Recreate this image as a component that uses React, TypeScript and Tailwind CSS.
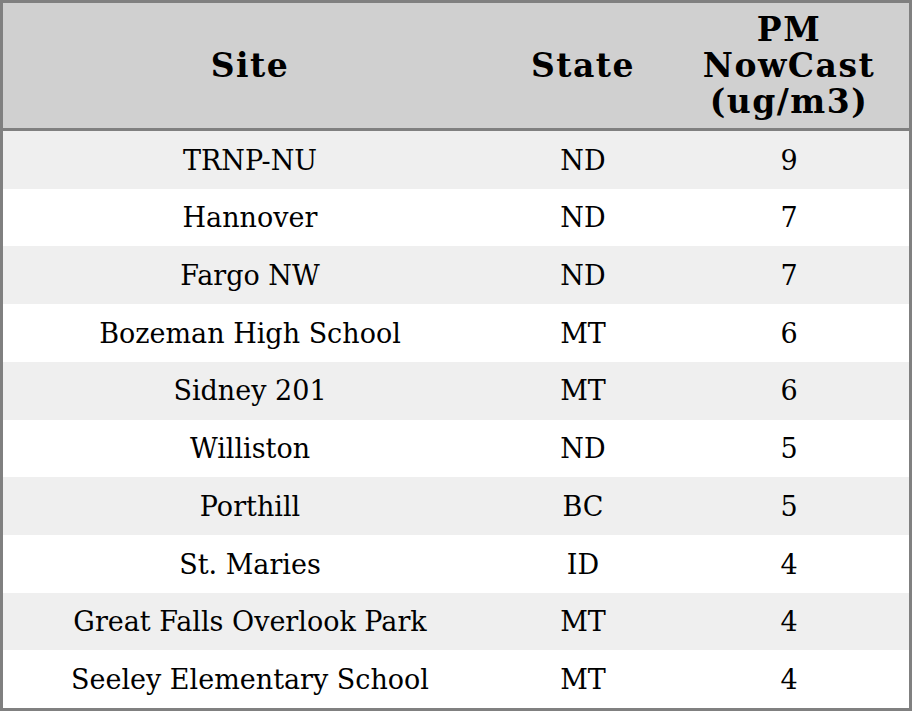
const rows: [string, string, number][] = [
  ["TRNP-NU", "ND", 9],
  ["Hannover", "ND", 7],
  ["Fargo NW", "ND", 7],
  ["Bozeman High School", "MT", 6],
  ["Sidney 201", "MT", 6],
  ["Williston", "ND", 5],
  ["Porthill", "BC", 5],
  ["St. Maries", "ID", 4],
  ["Great Falls Overlook Park", "MT", 4],
  ["Seeley Elementary School", "MT", 4],
];

export default function App() {
  return (
    <div
      className="w-[912px] h-[711px] border-[3px] border-[#808080] bg-white flex flex-col text-black"
      style={{ fontFamily: '"DejaVu Serif", serif' }}
    >
      <div className="h-[125px] shrink-0 bg-[#d0d0d0] border-b-[3px] border-[#808080] box-content grid grid-cols-[494px_172px_1fr] items-center text-center text-[33px] font-bold leading-[36px] tracking-[1.5px]">
        <div>Site</div>
        <div>State</div>
        <div>
          PM
          <br />
          NowCast
          <br />
          (ug/m3)
        </div>
      </div>
      <div className="flex-1 flex flex-col">
        {rows.map(([site, state, pm], i) => (
          <div
            key={i}
            className={`flex-1 grid grid-cols-[494px_172px_1fr] items-center text-center text-[27px] pt-[2px] ${
              i % 2 === 0 ? "bg-[#efefef]" : "bg-white"
            }`}
          >
            <div>{site}</div>
            <div>{state}</div>
            <div>{pm}</div>
          </div>
        ))}
      </div>
    </div>
  );
}
